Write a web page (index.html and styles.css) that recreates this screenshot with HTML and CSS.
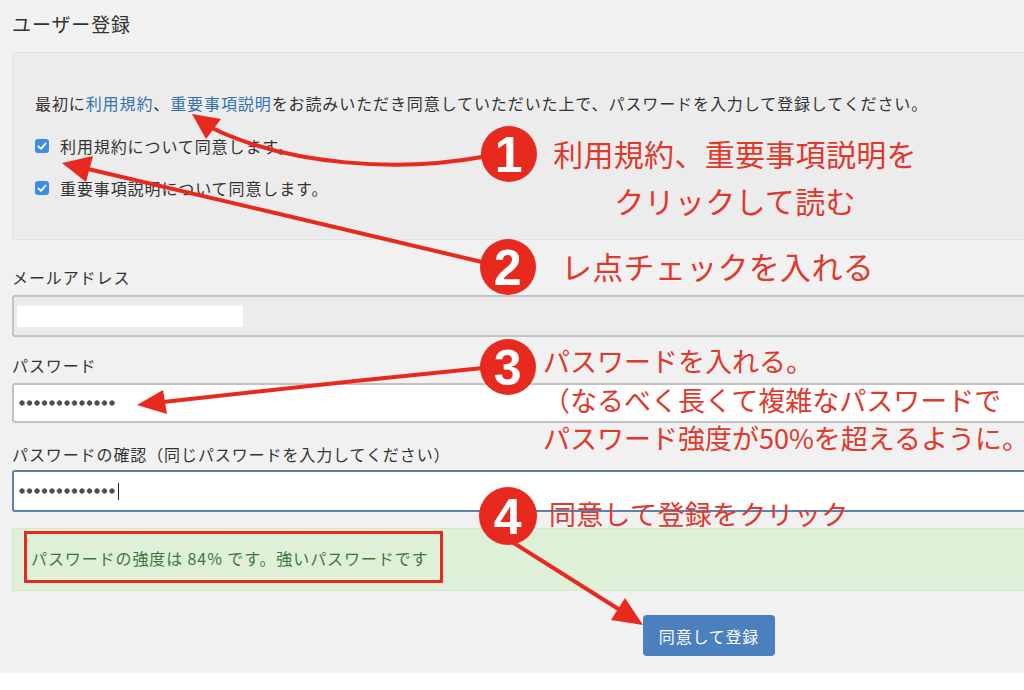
FILE: index.html
```html
<!DOCTYPE html>
<html lang="ja">
<head>
<meta charset="utf-8">
<title>ユーザー登録</title>
<link rel="stylesheet" href="styles.css">
</head>
<body>
<div class="page">
  <h1 class="title">ユーザー登録</h1>

  <section class="panel">
    <p class="intro">最初に<a href="#" class="link">利用規約</a>、<a href="#" class="link">重要事項説明</a>をお読みいただき同意していただいた上で、パスワードを入力して登録してください。</p>
    <label class="check-row">
      <span class="checkbox"><svg viewBox="0 0 14 14" width="14" height="14"><path d="M3.4 7.3 L6 9.8 L10.6 4.5" fill="none" stroke="#fff" stroke-width="1.8" stroke-linecap="round" stroke-linejoin="round"/></svg></span>
      <span>利用規約について同意します。</span>
    </label>
    <label class="check-row second">
      <span class="checkbox"><svg viewBox="0 0 14 14" width="14" height="14"><path d="M3.4 7.3 L6 9.8 L10.6 4.5" fill="none" stroke="#fff" stroke-width="1.8" stroke-linecap="round" stroke-linejoin="round"/></svg></span>
      <span>重要事項説明について同意します。</span>
    </label>
  </section>

  <div class="field-label email-label">メールアドレス</div>
  <div class="input input-readonly"><span class="masked-email"></span></div>

  <div class="field-label pw-label">パスワード</div>
  <div class="input input-pw"><span class="dots"></span></div>

  <div class="field-label confirm-label">パスワードの確認（同じパスワードを入力してください）</div>
  <div class="input input-focus"><span class="dots"></span><span class="caret"></span></div>

  <div class="alert">
    <span class="alert-text">パスワードの強度は 84% です。強いパスワードです</span>
    <span class="highlight-box"></span>
  </div>

  <div class="actions">
    <button class="btn-primary" type="button">同意して登録</button>
  </div>

  <div class="annot">
    <svg class="arrows" width="1024" height="690" viewBox="0 0 1024 690">
      <g fill="none" stroke="#e8291d" stroke-width="4" stroke-linecap="round">
        <path d="M482 157 C 400 172, 290 166, 212 128"/>
        <path d="M482 262 C 380 238, 200 195, 88 169"/>
        <path d="M483 368 C 380 378, 250 392, 163 402"/>
        <path d="M506 538 L 620 610"/>
      </g>
      <g fill="#e8291d">
        <polygon points="192,114 221,119 206,139"/>
        <polygon points="62,163 93,156 86,182"/>
        <polygon points="137,405 163,390 167,414"/>
        <polygon points="643,625 611,620 625,598"/>
      </g>
      <g class="badges">
        <circle cx="509" cy="154" r="28" fill="#e8291d"/>
        <circle cx="508" cy="267" r="28" fill="#e8291d"/>
        <circle cx="508" cy="367" r="28" fill="#e8291d"/>
        <circle cx="508" cy="516" r="29" fill="#e8291d"/>
        <text x="509" y="172" class="badge-num">1</text>
        <text x="508" y="285" class="badge-num">2</text>
        <text x="508" y="385" class="badge-num">3</text>
        <text x="508" y="534" class="badge-num">4</text>
      </g>
    </svg>
    <div class="note note1">利用規約、重要事項説明を<br>クリックして読む</div>
    <div class="note note2">レ点チェックを入れる</div>
    <div class="note note3">パスワードを入れる。<br>（なるべく長くて複雑なパスワードで<br>パスワード強度が50%を超えるように。</div>
    <div class="note note4">同意して登録をクリック</div>
  </div>
</div>
</body>
</html>
```

FILE: styles.css
```css
html, body {
  margin: 0;
  padding: 0;
  background: #ffffff;
  width: 1024px;
  height: 690px;
  overflow: hidden;
}

.page {
  position: relative;
  width: 1100px;
  height: 673px;
  box-sizing: border-box;
  padding-left: 12px;
  background: #f1f1f1;
  font-family: "Noto Sans CJK JP", "Noto Sans", sans-serif;
  color: #333333;
  font-size: 16px;
  letter-spacing: 0.9px;
  overflow: hidden;
}

.title {
  margin: 0;
  padding-top: 11px;
  font-size: 19px;
  line-height: 26px;
  font-weight: normal;
  letter-spacing: 0.9px;
  color: #333;
}

.panel {
  margin-top: 15px;
  height: 188px;
  box-sizing: border-box;
  border: 1px solid #e1e1e1;
  border-radius: 3px;
  background: #ececec;
  padding: 40px 22px 0 22px;
  display: flex;
  flex-direction: column;
  gap: 22px;
}

.intro {
  margin: 0 0 1px 0;
  line-height: 20px;
  white-space: nowrap;
}

.link {
  color: #3472b0;
  text-decoration: none;
}

.check-row {
  display: flex;
  align-items: center;
  gap: 11px;
  line-height: 20px;
}

.checkbox {
  width: 14px;
  height: 14px;
  border-radius: 3px;
  background: #3b8fe4;
  display: flex;
}

.field-label {
  line-height: 20px;
  white-space: nowrap;
}

.email-label { margin-top: 27px; }
.pw-label { margin-top: 18px; }
.confirm-label { margin-top: 21px; }

.input {
  margin-top: 8px;
  height: 42px;
  box-sizing: border-box;
  border: 2px solid #c2c2c2;
  border-radius: 3px;
  background: #ffffff;
  display: flex;
  align-items: center;
  padding-left: 5px;
}

.input-readonly {
  background: #ececec;
  padding-left: 3px;
}

.masked-email {
  width: 226px;
  height: 21px;
  background: #ffffff;
}

.input-pw {
  height: 40px;
}

.input-focus {
  margin-top: 6px;
  border-color: #5a82ae;
}

.dots {
  width: 97px;
  height: 6px;
  background: radial-gradient(circle at 3px 3px, #4d4d4d 2.4px, transparent 2.9px) 0 0 / 7.5px 6px repeat-x;
}

.caret {
  width: 1px;
  height: 17px;
  background: #222;
  margin-left: 2px;
}

.alert {
  position: relative;
  margin-top: 16px;
  height: 63px;
  box-sizing: border-box;
  background: #dff0d8;
  border: 1px solid #d3e8c8;
  display: flex;
  align-items: center;
  padding-left: 18px;
  color: #3c763d;
}

.alert-text {
  line-height: 20px;
  margin-top: -3px;
  white-space: nowrap;
}

.highlight-box {
  position: absolute;
  left: 11px;
  top: 2px;
  width: 419px;
  height: 52px;
  box-sizing: border-box;
  border: 3px solid #e8291d;
}

.actions {
  margin-top: 24px;
  padding-left: 631px;
}

.btn-primary {
  width: 132px;
  height: 41px;
  border: none;
  border-radius: 4px;
  background: #4a80bd;
  color: #ffffff;
  font-family: "Noto Sans CJK JP", sans-serif;
  font-size: 16px;
  letter-spacing: 0.8px;
  padding: 0;
}

.annot {
  position: absolute;
  left: 0;
  top: 0;
  width: 1024px;
  height: 690px;
  pointer-events: none;
}

.arrows {
  position: absolute;
  left: 0;
  top: 0;
}

.badge-num {
  font-family: "Liberation Sans", Arial, sans-serif;
  font-weight: bold;
  font-size: 50px;
  fill: #ffffff;
  text-anchor: middle;
}

.note {
  position: absolute;
  color: #e0392c;
  white-space: nowrap;
  letter-spacing: 0.3px;
}

.note1 {
  left: 548px;
  top: 130px;
  width: 374px;
  text-align: center;
  font-size: 30px;
  line-height: 47px;
}

.note2 {
  left: 561px;
  top: 248px;
  font-size: 31px;
  line-height: 36px;
}

.note3 {
  left: 543px;
  top: 342px;
  font-size: 27px;
  line-height: 38.5px;
  letter-spacing: 0;
}

.note4 {
  left: 549px;
  top: 497px;
  font-size: 27px;
  line-height: 34px;
}
```
